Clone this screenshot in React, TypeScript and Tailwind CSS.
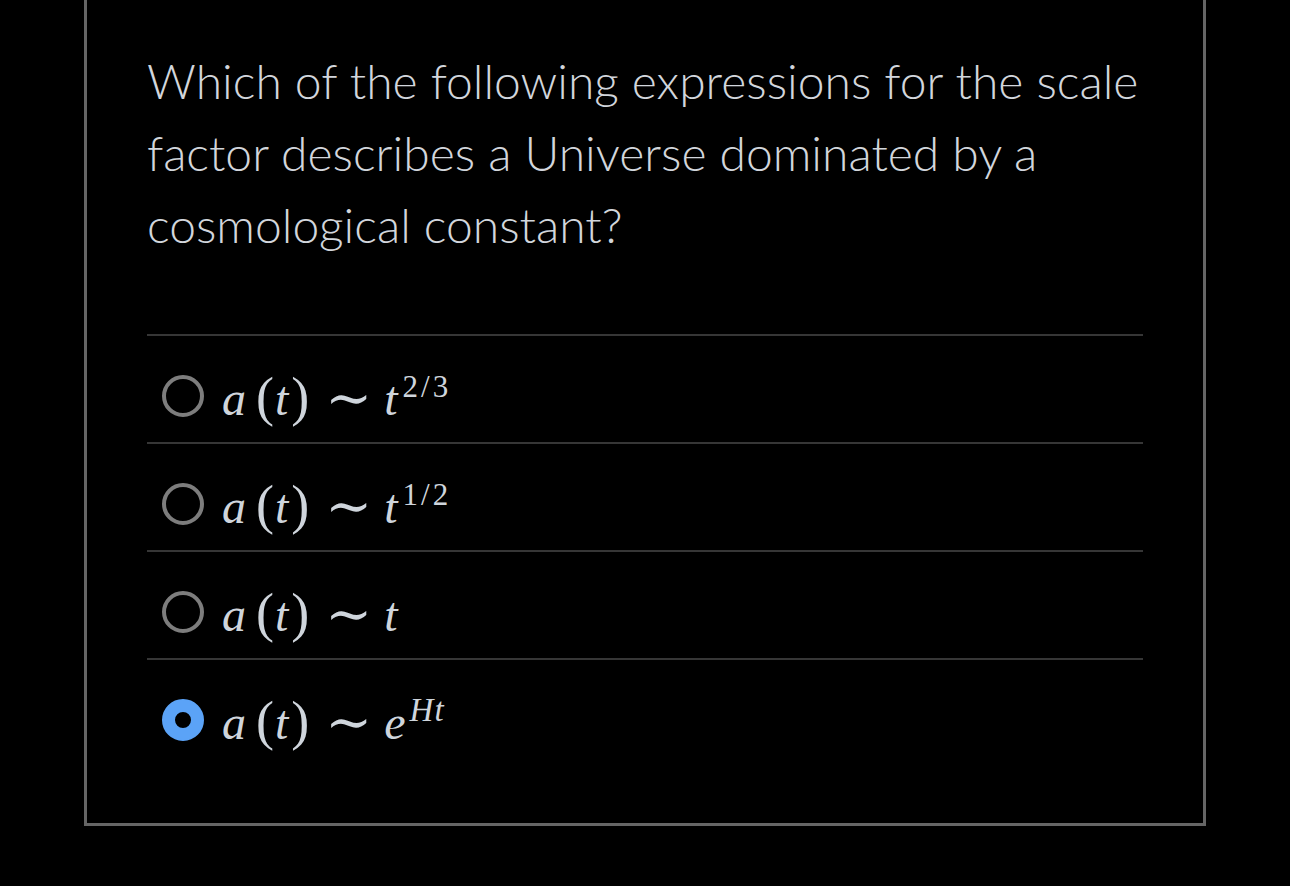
const options = [
  { sup: '2/3', base: 't', selected: false },
  { sup: '1/2', base: 't', selected: false },
  { sup: '', base: 't', selected: false },
  { sup: 'Ht', base: 'e', selected: true },
];

function Radio({ selected }: { selected: boolean }) {
  if (selected) {
    return <span className="box-border block size-[42px] shrink-0 rounded-full border-[13px] border-[#5ba3f7]" />;
  }
  return <span className="box-border block size-[42px] shrink-0 rounded-full border-[4px] border-[#7d7d7d]" />;
}

function Formula({ base, sup }: { base: string; sup: string }) {
  const italicSup = sup === 'Ht';
  return (
    <span
      className="flex h-[42px] items-baseline text-[48px] leading-[42px] text-[#cfd5dc] italic"
      style={{ fontFamily: '"Liberation Serif", "DejaVu Serif", serif' }}
    >
      <span>a</span>
      <span className="ml-[10px] text-[54px] not-italic">(</span>
      <span className="ml-[1px]">t</span>
      <span className="ml-[3px] text-[54px] not-italic">)</span>
      <span className="relative top-[2px] ml-[16px] text-[56px] not-italic">∼</span>
      <span className="ml-[12px]">{base}</span>
      {sup && (
        <span
          className={
            italicSup
              ? 'relative -top-[18px] ml-[4px] text-[33px] tracking-[1px]'
              : 'relative -top-[18px] ml-[5px] text-[31px] tracking-[3px] not-italic'
          }
        >
          {sup}
        </span>
      )}
    </span>
  );
}

export default function App() {
  return (
    <div className="min-h-[886px] w-full bg-black" style={{ fontFamily: 'Lato, "Noto Sans", sans-serif' }}>
      <div className="ml-[84px] w-[1122px] border-x-[3px] border-b-[3px] border-[#656565] px-[60px] pt-[45px] pb-[57px]">
        <p className="text-[48px] leading-[72px] font-light text-[#d2d6dc]">
          Which of the following expressions for the scale factor describes a Universe dominated by a cosmological constant?
        </p>
        <div className="mt-[73px]">
          {options.map((o, i) => (
            <div key={i} className="flex items-center gap-[18px] border-t-2 border-[#363636] pt-[39px] pb-[25px] pl-[15px]">
              <Radio selected={o.selected} />
              <Formula base={o.base} sup={o.sup} />
            </div>
          ))}
        </div>
      </div>
    </div>
  );
}
